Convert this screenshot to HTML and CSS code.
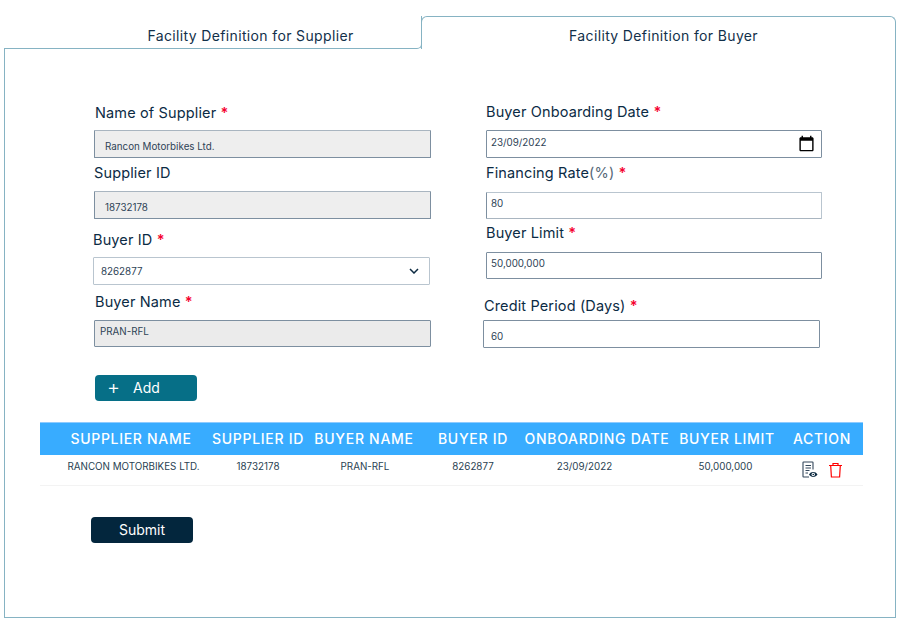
FILE: index.html
```html
<!DOCTYPE html>
<html lang="en">
<head>
<meta charset="utf-8">
<title>Facility Definition</title>
<link rel="stylesheet" href="styles.css">
</head>
<body>
<main class="panel">
  <div class="tabs">
    <div class="tab tab-supplier">Facility Definition for Supplier</div>
    <div class="tab tab-buyer">Facility Definition for Buyer</div>
  </div>
  <div class="sheet">
    <form class="form">
      <div class="col col-left">
        <div class="field f-name">
          <label class="label">Name of Supplier <span class="req">*</span></label>
          <div class="control readonly pad-wide low">Rancon Motorbikes Ltd.</div>
        </div>
        <div class="field f-sid">
          <label class="label">Supplier ID</label>
          <div class="control readonly pad-wide low">18732178</div>
        </div>
        <div class="field f-bid">
          <label class="label">Buyer ID <span class="req">*</span></label>
          <div class="control light pad-mid">8262877
            <svg class="chevron" viewBox="0 0 10 6" width="10" height="6"><path d="M1 1l4 4 4-4" fill="none" stroke="#0d2b42" stroke-width="1.5"/></svg>
          </div>
        </div>
        <div class="field f-bname">
          <label class="label">Buyer Name <span class="req">*</span></label>
          <div class="control readonly-alt pad-name high">PRAN-RFL</div>
        </div>
        <button type="button" class="btn btn-add"><span class="plus">+</span>Add</button>
      </div>
      <div class="col col-right">
        <div class="field f-date">
          <label class="label">Buyer Onboarding Date <span class="req">*</span></label>
          <div class="control pad-tight high">23/09/2022
            <svg class="calendar" viewBox="0 0 24 24" width="17" height="17"><path d="M20 3h-1V1h-2v2H7V1H5v2H4c-1.1 0-2 .9-2 2v16c0 1.1.9 2 2 2h16c1.1 0 2-.9 2-2V5c0-1.1-.9-2-2-2zm0 18H4V8h16v13z" fill="#000"/></svg>
          </div>
        </div>
        <div class="field f-rate">
          <label class="label">Financing Rate<span class="muted">(%)</span> <span class="req">*</span></label>
          <div class="control soft pad-tight high">80</div>
        </div>
        <div class="field f-limit">
          <label class="label">Buyer Limit <span class="req">*</span></label>
          <div class="control pad-tight high">50,000,000</div>
        </div>
        <div class="field f-credit">
          <label class="label">Credit Period (Days) <span class="req">*</span></label>
          <div class="control pad-credit low">60</div>
        </div>
      </div>
    </form>
    <table class="grid">
      <thead>
        <tr>
          <th class="c1">SUPPLIER NAME</th>
          <th class="c2">SUPPLIER ID</th>
          <th class="c3">BUYER NAME</th>
          <th class="c4">BUYER ID</th>
          <th class="c5">ONBOARDING DATE</th>
          <th class="c6">BUYER LIMIT</th>
          <th class="c7">ACTION</th>
        </tr>
      </thead>
      <tbody>
        <tr>
          <td class="c1">RANCON MOTORBIKES LTD.</td>
          <td class="c2">18732178</td>
          <td class="c3">PRAN-RFL</td>
          <td class="c4">8262877</td>
          <td class="c5">23/09/2022</td>
          <td class="c6">50,000,000</td>
          <td class="c7">
            <div class="actions">
              <svg viewBox="0 0 16 17" width="16" height="17"><path d="M11 8.500V1.600a.6.6 0 0 0-.6-.6H1.600a.6.6 0 0 0-.6.6v13.800c0 .3.3.6.6.6H7" fill="none" stroke="#33475b" stroke-width="1.100"/><path d="M3.500 4.500h5.500M3.500 7h5.500M3.500 9.500h4M3.500 12h2.500" stroke="#33475b" stroke-width="1"/><path d="M7 13.500c1.800-3.300 6.700-3.300 8.500 0-1.800 3.300-6.700 3.300-8.500 0z" fill="#0d2b42"/><circle cx="11.250" cy="13.500" r="1.700" fill="#fff"/><circle cx="11.250" cy="13.500" r=".8" fill="#0d2b42"/></svg>
              <svg viewBox="0 0 15 16" width="15" height="16"><path d="M1 3.500h13M5 3.300V1.500h5v1.800M2.700 3.500l.7 11.500h8.200l.7-11.500" fill="none" stroke="#ff0000" stroke-width="1.200"/></svg>
            </div>
          </td>
        </tr>
      </tbody>
    </table>
    <button type="button" class="btn btn-submit">Submit</button>
  </div>
</main>
</body>
</html>
```
FILE: styles.css
```css
* { box-sizing: border-box; }
html, body { margin: 0; padding: 0; background: #fff; }
body { font-family: Inter, "Liberation Sans", sans-serif; color: #0b2b44; width: 911px; height: 639px; overflow: hidden; }

.panel { width: 892px; margin: 16px 0 0 4px; }

.tabs { display: flex; height: 33px; }
.tab { display: flex; align-items: center; justify-content: center; font-size: 14px; letter-spacing: .36px; color: #12304a; padding-top: 6px; }
.tab-supplier { width: 418px; border-bottom: 1px solid #86b3c3; border-right: 1px solid #86b3c3; border-bottom-right-radius: 5px; padding-left: 76px; }
.tab-buyer { flex: 1; margin-left: -1px; border: 1px solid #86b3c3; border-bottom: 0; border-radius: 6px 6px 0 0; padding-left: 10px; padding-top: 5px; }

.sheet { height: 569px; border: 1px solid #86b3c3; border-top: 0; padding-left: 35px; }

.form { display: flex; gap: 52px; padding-left: 53px; height: 352px; }
.col { display: flex; flex-direction: column; }
.col-left { width: 338px; padding-top: 55px; }
.col-right { width: 340px; padding-top: 54px; }

.label { display: block; height: 18px; line-height: 18px; font-size: 14.500px; font-weight: 400; white-space: nowrap; letter-spacing: .14px; }
.req { color: #f5002e; font-weight: 600; }
.muted { color: #566878; }

.control { position: relative; display: flex; align-items: center; height: 28px; border: 1px solid #7d8fa0; border-radius: 1px; font-size: 9.800px; color: #2e4356; background: #fff; }
.readonly { background: #eeeeee; border-top-color: #a9b5c0; }
.readonly-alt { background: #ebebeb; }
.light { border-color: #b9c5cf; }
.soft { border-color: #b9c5cf; border-left-color: #7d8fa0; border-bottom-color: #a9b5c0; }
.pad-wide { padding-left: 10px; }
.pad-mid { padding-left: 7px; }
.pad-name { padding-left: 5px; }
.pad-tight { padding-left: 4px; }
.pad-credit { padding-left: 7px; }
.low { padding-top: 4px; }
.high { padding-bottom: 5px; }

.chevron { position: absolute; right: 10px; top: 10px; }
.calendar { position: absolute; right: 6px; top: 4px; }

.f-name .label { margin: 0 0 8px 2px; }
.f-name .control { margin-left: 1px; }
.f-sid { margin-top: 6px; }
.f-sid .label { margin: 0 0 9px 1px; }
.f-sid .control { margin-left: 1px; }
.f-bid { margin-top: 12px; }
.f-bid .label { margin: 0 0 8px 0; }
.f-bid .control { width: 337px; }
.f-bname { margin-top: 8px; }
.f-bname .label { margin: 0 0 9px 2px; }
.f-bname .control { height: 27px; margin-left: 1px; }

.f-date, .f-rate, .f-limit { margin-left: 3px; width: 336px; }
.f-date .label { margin-bottom: 9px; }
.f-date .control { padding-bottom: 3px; }
.f-rate { margin-top: 6px; }
.f-rate .label { margin-bottom: 10px; }
.f-rate .control { height: 27px; }
.f-limit { margin-top: 5px; }
.f-limit .label { margin-bottom: 10px; }
.f-limit .control { height: 27px; }
.f-credit { margin-top: 18px; }
.f-credit .label { margin: 0 0 5px 1px; }
.f-credit .control { width: 337px; }

.btn { display: flex; align-items: center; justify-content: center; width: 102px; height: 26px; border: 0; border-radius: 4px; color: #fff; font-family: inherit; font-size: 14px; padding: 0 0 1px; }
.btn-add { background: #066f87; margin: 28px 0 0 2px; justify-content: flex-start; padding-left: 12px; }
.plus { font-size: 20px; font-weight: 300; width: 26px; text-align: left; line-height: 1; position: relative; top: -1px; }
.btn-submit { background: #03263d; margin: 31px 0 0 51px; }

.grid { table-layout: fixed; width: 823px; margin-top: 21px; border-collapse: separate; border-spacing: 0; }
.grid th { height: 33px; padding: 0 0 2px; background: #38acff; color: #fff; font-size: 14px; font-weight: 500; letter-spacing: .7px; text-align: center; white-space: nowrap; border-top: 1px solid #8ecbff; }
.grid td { height: 31px; padding: 0 0 7px; font-size: 9.800px; color: #2a3f52; text-align: center; white-space: nowrap; border-bottom: 1px solid #f3f3f3; }
.grid .c1 { width: 166px; padding-left: 16px; }
.grid .c2 { width: 104px; }
.grid .c3 { width: 108px; }
.grid .c4 { width: 104px; padding-left: 6px; }
.grid .c5 { width: 154px; padding-right: 4px; }
.grid .c6 { width: 102px; }
.grid .c7 { width: 85px; padding-left: 3px; }
.grid td.c1 { padding-left: 21px; }
.grid td.c3 { padding-left: 2px; }
.grid td.c5 { padding-right: 29px; }
.grid td.c6 { padding-right: 3px; }
.grid td.c7 { padding-left: 3px; }

.actions { display: flex; justify-content: center; gap: 10px; align-items: center; padding-top: 6px; }
```
